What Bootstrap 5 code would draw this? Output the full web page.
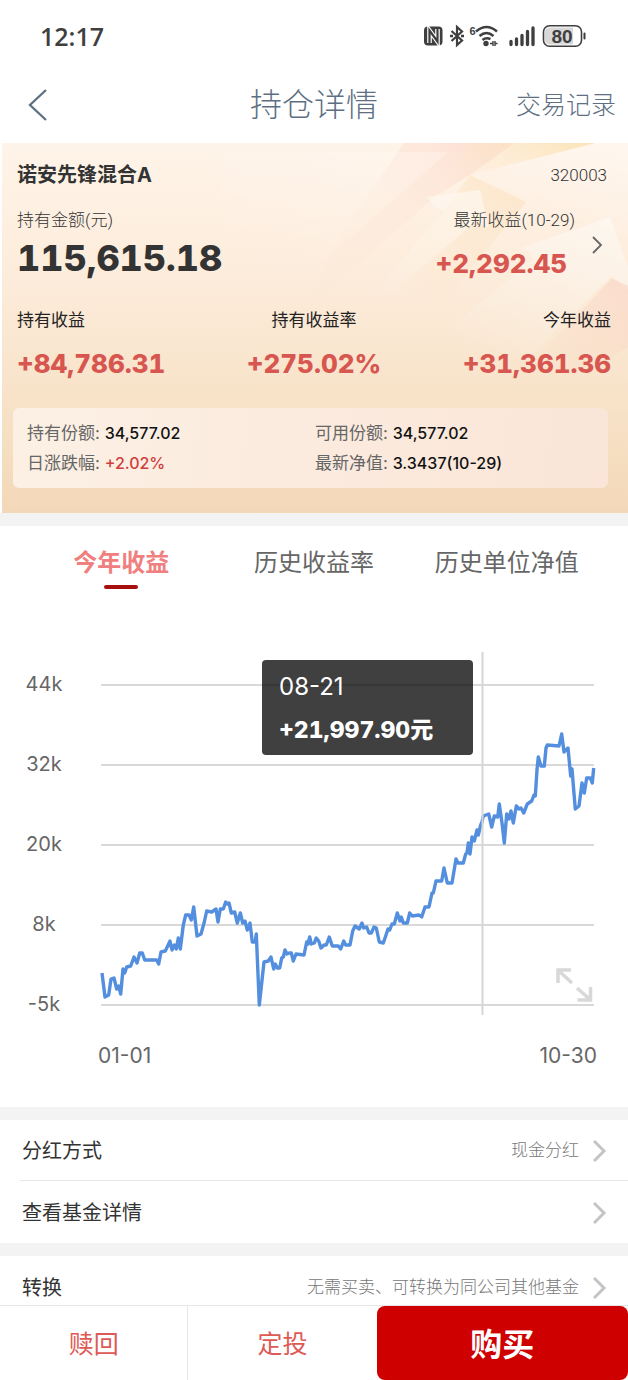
<!DOCTYPE html>
<html lang="zh-CN">
<head>
<meta charset="utf-8">
<meta name="viewport" content="width=device-width, initial-scale=1">
<title>持仓详情</title>
<link href="https://cdn.jsdelivr.net/npm/bootstrap@5.3.0/dist/css/bootstrap.min.css" rel="stylesheet">
<style>
  body { font-family: Inter, "Noto Sans CJK SC", sans-serif; color: #333; background: #fff; }
  a, button { color: inherit; text-decoration: none; }
  .shell { height: 100vh; }
  .scroller { overflow-y: auto; scrollbar-width: none; min-height: 0; }
  .scroller::-webkit-scrollbar { display: none; }

  .statusbar { height: 72px; padding: 0 42px 0 40px; color: #3f3f3f; flex: none; }
  .clock { font: 600 25px/32px "Open Sans", sans-serif; }
  .topbar { height: 71px; padding: 0 12px 6px; color: #5d7083; flex: none; }
  .topbar h1 { font-size: 32px; line-height: 40px; font-weight: 300; }
  .topbar a { font-size: 25px; line-height: 40px; font-weight: 300; }
  .side { flex: 1 1 0; }

  .holding { margin-left: 2px; padding: 18px 17px 25px 15px;
    background: linear-gradient(#fff4e9 0%, #fcebd9 40%, #f8e3c9 68%, #f3d8b8 100%); }
  .art { position: absolute; inset: 0; width: 100%; height: 100%; opacity: .8; }
  .fund { font-size: 20px; line-height: 28px; font-weight: 700; }
  .code { font: 300 17px/28px Roboto, sans-serif; padding-right: 4px; }
  .cap { font-size: 17px; line-height: 24px; font-family: Roboto, "Noto Sans CJK SC", sans-serif; }
  .thin { font-weight: 300; }
  .gap-a { margin-top: 19px; }
  .gap-b { margin-top: 24px; }
  .total, .gain, .tip-sum { font-weight: 800; font-variant-numeric: tabular-nums; }
  .total { font-size: 36px; line-height: 48px; margin-top: 2px; }
  .gain { font-size: 26px; line-height: 40px; color: #d85650; margin-top: 12px; }
  .latest { padding-right: 8px; }
  .dark { color: #222; }
  .facts { margin: 24px 3px 0 -4px; padding: 10px 5px 10px 14px; border-radius: 6px; font-size: 17px; line-height: 30px; color: #666;
    background: linear-gradient(100deg, #fcf0e4, #fae5d8); }
  .facts b { font-size: 16px; font-weight: 500; color: #111; }
  .facts .up { color: #cf3c3c; }

  .band { height: 13px; background: #f3f3f3; flex: none; }
  .tabs { padding: 14px 25px 0; height: 74px; }
  .tabs button { flex: 1 1 0; background: none; border: 0; padding: 0; font-size: 24px; line-height: 44px; color: #666; height: 50px; }
  .tabs button::after { content: ""; display: block; width: 34px; height: 4px; border-radius: 2px; margin: 0 auto; }
  .tabs .on { color: #f08080; font-weight: 700; }
  .tabs .on::after { background: #a81010; }
  .plot { margin-bottom: 7px; }
  .plot text { font-size: 20px; fill: #666; }
  .plot .day { font-size: 21px; }
  .plot .tip-day { font-size: 24px; fill: #fff; }
  .plot .tip-sum { font-size: 23px; fill: #fff; }

  .item { height: 62px; padding: 1px 21px 0 22px; font-size: 20px; color: #333; }
  .item:not(:last-child) { height: 61px; }
  .item .hint { font-size: 17px; font-weight: 300; color: #777; margin-right: 14px; }
  .item + .item { position: relative; }
  .item + .item::before { content: ""; position: absolute; top: -1px; left: 20px; right: 0; border-top: 1px solid #e8e8e8; }

  .actions { height: 75px; border-top: 1px solid #e6e6e6; }
  .actions button { background: none; border: 0; padding: 3px 0 0; font-size: 25px; color: #dd5a55; width: 30%; }
  .actions button:first-child { border-right: 1px solid #e6e6e6; }
  .actions .buy { width: 40%; background: #cf0000; color: #fff; font-size: 32px; font-weight: 700; border-radius: 8px; }
</style>
</head>
<body>
<div class="shell d-flex flex-column">
  <div class="statusbar d-flex align-items-center justify-content-between">
    <span class="clock">12:17</span>
    <svg width="164" height="28" viewBox="422 22 164 28" role="img" aria-label="80">
      <rect x="424" y="26.500" width="18.500" height="19" rx="4" fill="#3f3f3f"/>
      <path d="M429.500 43V30.500l8 11V29" fill="none" stroke="#fff" stroke-width="4.600"/>
      <path d="M429.500 43V30.500l8 11V29" fill="none" stroke="#3f3f3f" stroke-width="2.200"/>
      <path d="M451.500 31l10.500 9.500-5 4.500V27l5 4.500-10.500 9.500" fill="none" stroke="#3f3f3f" stroke-width="2.200"/>
      <path d="M450 36h3M461 36h3" stroke="#3f3f3f" stroke-width="2.400"/>
      <text x="469.500" y="35" font-family="Liberation Sans" font-size="11" font-weight="700" fill="#3f3f3f">6</text>
      <g fill="none" stroke="#3f3f3f" stroke-width="2.500">
        <path d="M476 31.500q10.500-9 21 0M479.500 36q7-6 14 0M482.500 40q3.500-3 8-1"/>
      </g>
      <circle cx="486" cy="43.500" r="2.700" fill="#3f3f3f"/>
      <path d="M490 43.500h3v-2.500v5M497.500 43.500h-2.500v-2.500v5" fill="none" stroke="#3f3f3f" stroke-width="1.400"/>
      <path d="M511 41.500v3M516.500 39v5.500M522 35.500v9M527.500 31.500v13M533 28v16.500" stroke="#3f3f3f" stroke-width="3.300" stroke-linecap="round"/>
      <rect x="543.500" y="25.700" width="38" height="20.500" rx="6" fill="#fff" stroke="#3f3f3f" stroke-width="1.600"/>
      <path d="M550 27.500h23v17h-23q-5 0-5-5v-7q0-5 5-5z" fill="#d8d8d8"/>
      <path d="M584.500 33.500v5" stroke="#3f3f3f" stroke-width="2" stroke-linecap="round"/>
      <text x="562" y="42.500" text-anchor="middle" font-family="Liberation Sans" font-size="19" font-weight="700" fill="#3f3f3f">80</text>
    </svg>
  </div>

  <header class="topbar d-flex align-items-center">
    <div class="side">
      <button class="btn p-0 border-0 d-block ms-3" type="button" aria-label="返回">
        <svg class="d-block" width="20" height="32" viewBox="0 0 20 32" fill="none" stroke="#5d7083" stroke-width="2.300"><path d="M18 1L2 16l16 15"/></svg>
      </button>
    </div>
    <h1 class="m-0">持仓详情</h1>
    <div class="side text-end"><a href="#records">交易记录</a></div>
  </header>

  <main class="scroller flex-grow-1">
    <section class="holding position-relative overflow-hidden">
      <svg class="art" viewBox="0 0 626 370" preserveAspectRatio="none" aria-hidden="true">
        <defs>
          <linearGradient id="pk" x1="1" y1="0" x2="0" y2="1"><stop offset="0" stop-color="#fbc5b8" stop-opacity=".6"/><stop offset=".5" stop-color="#fde3d3" stop-opacity=".3"/><stop offset="1" stop-color="#fde3d3" stop-opacity="0"/></linearGradient>
          <linearGradient id="ye" x1="1" y1="0" x2="0" y2=".6"><stop offset="0" stop-color="#fbdc9f" stop-opacity=".85"/><stop offset="1" stop-color="#fde8cf" stop-opacity=".1"/></linearGradient>
          <linearGradient id="ys" x1="1" y1="0" x2=".2" y2="1"><stop offset="0" stop-color="#fbdfb4" stop-opacity=".7"/><stop offset=".8" stop-color="#fde8cf" stop-opacity="0"/></linearGradient>
          <linearGradient id="wh" x1="1" y1="0" x2=".3" y2=".8"><stop offset="0" stop-color="#fff" stop-opacity=".6"/><stop offset="1" stop-color="#fff" stop-opacity="0"/></linearGradient>
          <linearGradient id="pe" x1="1" y1="0" x2="0" y2="1"><stop offset="0" stop-color="#f9c9bb" stop-opacity=".8"/><stop offset="1" stop-color="#fbdccb" stop-opacity="0"/></linearGradient>
        </defs>
        <path d="M402 0h110L468 32 435 52 300 170 340 90z" fill="url(#pk)"/>
        <path d="M470 0h124L468 32 430 50z" fill="url(#ye)"/>
        <path d="M468 32l56 27-90 110-90 30z" fill="url(#ys)"/>
        <path d="M220 9h226L310 128 200 200z" fill="url(#wh)" opacity=".5"/>
        <path d="M594 0h32v95l-158-63z" fill="url(#wh)" opacity=".6"/>
        <path d="M478 47l9 38-14-6L330 200l112-132-8-4-10-10z" fill="url(#wh)"/>
        <path d="M608 74l18 50v22l-18-12-80 80-150 30 153-128-4-8-8-3z" fill="url(#wh)"/>
        <path d="M610 135l16 8v62l-60 30-40-10z" fill="url(#pe)" opacity=".7"/>
      </svg>
      <div class="position-relative">
        <div class="d-flex justify-content-between">
          <h2 class="fund m-0">诺安先锋混合A</h2>
          <span class="code">320003</span>
        </div>
        <div class="d-flex gap-a">
          <div class="me-auto">
            <div class="cap thin">持有金额(元)</div>
            <div class="total">115,615.18</div>
          </div>
          <div class="text-end">
            <div class="cap thin">最新收益(10-29)</div>
            <div class="gain latest">+2,292.45</div>
          </div>
          <a href="#income" class="ms-3 me-2 pt-4" aria-label="收益明细">
            <svg class="d-block mt-1" width="12" height="18" viewBox="0 0 12 18" fill="none" stroke="#666" stroke-width="1.800"><path d="M2 1l8 8-8 8"/></svg>
          </a>
        </div>
        <div class="row g-0 gap-b dark">
          <div class="col"><div class="cap">持有收益</div><div class="gain">+84,786.31</div></div>
          <div class="col text-center"><div class="cap">持有收益率</div><div class="gain">+275.02%</div></div>
          <div class="col text-end"><div class="cap">今年收益</div><div class="gain">+31,361.36</div></div>
        </div>
        <div class="facts row gx-0">
          <div class="col-6">持有份额: <b>34,577.02</b></div>
          <div class="col-6">可用份额: <b>34,577.02</b></div>
          <div class="col-6">日涨跌幅: <b class="up">+2.02%</b></div>
          <div class="col-6">最新净值: <b>3.3437(10-29)</b></div>
        </div>
      </div>
    </section>

    <div class="band"></div>

    <div class="tabs d-flex" role="tablist">
      <button type="button" role="tab" aria-selected="true" class="on">今年收益</button>
      <button type="button" role="tab" aria-selected="false">历史收益率</button>
      <button type="button" role="tab" aria-selected="false">历史单位净值</button>
    </div>

    <svg class="plot d-block w-100" viewBox="0 0 628 500" role="img" aria-label="今年收益走势">
      <path d="M101 85H594M101 165H594M101 245H594M101 325H594M101 405H594" stroke="#d9d9d9" stroke-width="2"/>
      <g text-anchor="middle">
        <text x="44" y="91">44k</text><text x="44" y="171">32k</text><text x="44" y="251">20k</text><text x="44" y="331">8k</text><text x="44" y="411">-5k</text>
      </g>
      <text class="day" x="98" y="463">01-01</text>
      <text class="day" x="597" y="463" text-anchor="end">10-30</text>
      <g fill="none" stroke="#d8d8d8" stroke-width="3.500">
        <path d="M558 383v-13h13M558.500 370.500L572 383M590.500 387v13h-13M590 399.500L577 388"/>
      </g>
      <polyline fill="none" stroke="#538fde" stroke-width="3.400" stroke-linejoin="round" points="102,373 105,397 108.700,395 111,379 114,378 116.700,389 118.700,386 120.700,394 123,369 124.700,373 126.700,367 130.700,366 134,357 137,363 139.700,353 142.300,353 144.700,360 156.700,360 158.700,364 161,352 165.300,351 167.700,346 170,341 172,350 174.300,345 176.300,349 178.300,338 180.300,349 183.300,325 185.700,315 189,315 191.300,320 193.700,307 197,336 201,334 204.300,322 206.700,311 211.700,312 216,309 218,322 220.300,309 223.300,309 225.700,302 227.300,304 229,303 231.300,313 234.700,312 237.300,323 240.300,313 242.700,323 245,321 247.300,330 250,323 252.300,342 255.300,342 256.300,334 259.300,405 264,362 268.300,361 271,357 273.700,369 275.300,364 277.300,368 279.700,368 281.700,358 283.300,357 285,350 287,354 289.300,353 291.300,353 293.300,361 296,354 304,355 306.700,342 308,344 309.700,337 311.300,344 314.300,343 316.300,338 318.700,341 321,348 324,345 326.300,345 329.300,337 332.300,346 338.300,346 340.700,349 343.700,341 345.700,345 350,345 352.700,331 355,326 359.300,329 362,323 363.700,328 366.700,327 369,333 371.300,333 374,327 376.300,328 379.300,342 383.300,343 385.700,336 388,329 389.700,330 392,324 394.300,324 397.300,313 400,321 401.300,317 403.300,323 407.300,323 409.700,313 412.300,316 419,315 421.700,317 425,307 429,307 432,293 433.300,293 436,281 441.700,281 444,268 447.300,283 452,283 456,259 458,263 463.300,263 465.700,254 467,253 468.300,243 470,254 472,237 474.300,241 477,230 478.300,235 480.700,225 482,222 483.300,216 488.700,214 491.700,227 494.300,216 497.700,217 499.300,204 502,223 504.300,243 506.700,214 509,219 511,211 513.300,223 516.300,206 519,209 521,208 523.700,213 527.300,204 531.700,201 534,195 535.300,196 537,170 538.300,157 541,166 544.300,166 546,148 547.300,145 559,146 561.700,134 564,152 568,148 570.700,176 572,169 573.700,190 575.300,209 579,206 582,183 584.300,193 586.700,178 590.300,178 592.300,183 593.700,168"/>
      <path d="M482.500 52V415" stroke="#d6d6d6" stroke-width="2"/>
      <rect x="262" y="60" width="211" height="95" rx="4" fill="#000" fill-opacity=".75"/>
      <text class="tip-day" x="279" y="95">08-21</text>
      <text class="tip-sum" x="279" y="138">+21,997.90元</text>
    </svg>

    <div class="band"></div>
    <nav>
      <a href="#dividend" class="item d-flex align-items-center justify-content-between">
        <span>分红方式</span>
        <span class="d-flex align-items-center"><span class="hint">现金分红</span>
          <svg width="14" height="22" viewBox="0 0 14 22" fill="none" stroke="#c4c4c6" stroke-width="3"><path d="M1 1l10 10L1 21"/></svg></span>
      </a>
      <a href="#fund" class="item d-flex align-items-center justify-content-between">
        <span>查看基金详情</span>
        <svg width="14" height="22" viewBox="0 0 14 22" fill="none" stroke="#c4c4c6" stroke-width="3"><path d="M1 1l10 10L1 21"/></svg>
      </a>
    </nav>
    <div class="band"></div>
    <nav>
      <a href="#convert" class="item d-flex align-items-center justify-content-between">
        <span>转换</span>
        <span class="d-flex align-items-center"><span class="hint">无需买卖、可转换为同公司其他基金</span>
          <svg width="14" height="22" viewBox="0 0 14 22" fill="none" stroke="#c4c4c6" stroke-width="3"><path d="M1 1l10 10L1 21"/></svg></span>
      </a>
    </nav>
  </main>

  <footer class="actions d-flex flex-shrink-0 bg-white">
    <button type="button">赎回</button>
    <button type="button">定投</button>
    <button type="button" class="buy">购买</button>
  </footer>
</div>
<script src="https://cdn.jsdelivr.net/npm/bootstrap@5.3.0/dist/js/bootstrap.bundle.min.js"></script>
</body>
</html>
